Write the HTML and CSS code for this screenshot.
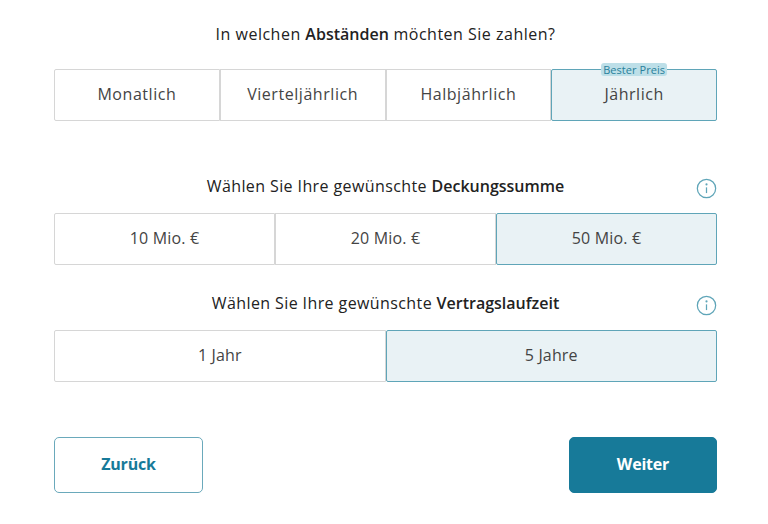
FILE: index.html
```html
<!DOCTYPE html>
<html lang="de">
<head>
<meta charset="utf-8">
<title>Zahlung</title>
<link rel="stylesheet" href="styles.css">
</head>
<body>
<main class="page">
  <h2 class="heading first">In welchen <b>Abständen</b> möchten Sie zahlen?</h2>
  <div class="group wide">
    <button class="opt">Monatlich</button>
    <button class="opt">Vierteljährlich</button>
    <button class="opt">Halbjährlich</button>
    <button class="opt sel">Jährlich<span class="badge">Bester Preis</span></button>
  </div>
  <div class="heading-row second">
    <h2 class="heading">Wählen Sie Ihre gewünschte <b>Deckungssumme</b></h2>
    <svg class="info" viewBox="0 0 22 22" aria-hidden="true"><circle cx="11" cy="11" r="9.6"/><path d="M11 9.8v6"/><circle class="dot" cx="11" cy="6.7" r="1.1"/></svg>
  </div>
  <div class="group">
    <button class="opt">10 Mio. €</button>
    <button class="opt">20 Mio. €</button>
    <button class="opt sel">50 Mio. €</button>
  </div>
  <div class="heading-row third">
    <h2 class="heading">Wählen Sie Ihre gewünschte <b>Vertragslaufzeit</b></h2>
    <svg class="info" viewBox="0 0 22 22" aria-hidden="true"><circle cx="11" cy="11" r="9.6"/><path d="M11 9.8v6"/><circle class="dot" cx="11" cy="6.7" r="1.1"/></svg>
  </div>
  <div class="group">
    <button class="opt">1 Jahr</button>
    <button class="opt sel">5 Jahre</button>
  </div>
  <div class="actions">
    <button class="btn back">Zurück</button>
    <button class="btn next">Weiter</button>
  </div>
</main>
</body>
</html>
```
FILE: styles.css
```css
* { box-sizing: border-box; }
html, body { margin: 0; height: 100%; background: #fff; }
body { font-family: "Open Sans", "Noto Sans", sans-serif; color: #222; overflow: hidden; }
.page { width: 663px; margin-left: 54px; padding-top: 22px; }
.heading { margin: 0; font-size: 16px; line-height: 24px; font-weight: 400; letter-spacing: 0.4px; text-align: center; color: #222; }
.heading b { font-weight: 600; letter-spacing: 0; }
.heading.first { margin-bottom: 23px; letter-spacing: 0.5px; }
.heading-row { position: relative; margin-bottom: 15px; }
.heading-row.second { margin-top: 53px; }
.heading-row.third { margin-top: 26px; }
.info { position: absolute; right: 0; top: 4px; width: 21px; height: 21px; fill: none; stroke: #5fa5b8; stroke-width: 1.3; }
.info .dot { fill: #5fa5b8; stroke: none; }
.group { display: flex; height: 52px; }
.opt { position: relative; flex: 1 1 0; min-width: 0; padding: 0 0 3px; margin: 0; background: #fff; border: 1px solid #d6d6d6; font: inherit; font-size: 16px; letter-spacing: 0.15px; color: #444; }
.wide .opt { letter-spacing: 0.55px; }
.opt:first-child { border-radius: 2px 0 0 2px; }
.opt:last-child { border-radius: 0 2px 2px 0; }
.opt.sel { background: #e9f2f5; border-color: #5fa5b8; border-radius: 2px; }
.wide .badge { position: absolute; left: 50%; top: -7px; transform: translateX(-50%); padding: 0 2px; background: #bddfe8; border-radius: 3px; font-size: 11px; line-height: 13px; letter-spacing: 0.05px; color: #2a7f9b; white-space: nowrap; }
.actions { display: flex; justify-content: space-between; margin-top: 55px; }
.btn { width: 148px; height: 56px; padding: 0 0 3px; border-radius: 5px; font: inherit; font-size: 16px; font-weight: 700; letter-spacing: -0.2px; }
.back { width: 149px; background: #fff; border: 1px solid #6aa9bb; color: #177a99; }
.next { background: #177a99; border: 1px solid #177a99; color: #fff; }
```
